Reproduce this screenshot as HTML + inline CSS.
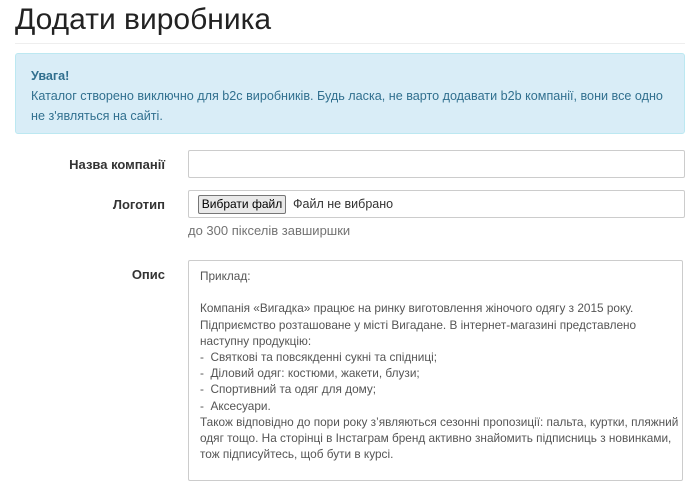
<!DOCTYPE html>
<html><head><meta charset="utf-8"><style>
body{margin:0;background:#fff;font-family:"Liberation Sans",sans-serif;font-size:13px;color:#333;width:700px;height:488px;overflow:hidden;position:relative}
h1{position:absolute;left:15px;top:0;margin:0;font-size:30px;font-weight:500;color:#222;line-height:40px}
.hr{position:absolute;left:15px;top:43px;width:670px;border-top:1px solid #eee}
.alert{position:absolute;left:15px;top:53px;width:668px;height:79px;background:#d9edf7;border:1px solid #bce8f1;border-radius:3px;color:#31708f;line-height:20px;font-size:12.6px}
.alert div{padding:12px 0 0 15px;white-space:nowrap}
.lbl{position:absolute;right:535px;font-weight:bold;color:#333}
.inp{position:absolute;left:188px;width:495px;border:1px solid #ccc;border-radius:2px;background:#fff}
.btn{position:absolute;left:9px;top:4px;width:88px;box-sizing:border-box;text-align:center;height:19px;border:1px solid #767676;border-radius:2px;background:#e9e9e9;line-height:17px;color:#000;font-size:12px}
.ta{color:#555;line-height:16.2px;padding:7px 0 0 11px;box-sizing:border-box;font-size:11.8px;white-space:nowrap;overflow:hidden}
</style></head><body>
<h1>Додати виробника</h1>
<div class="hr"></div>
<div class="alert"><div><b>Увага!</b><br>Каталог створено виключно для b2c виробників. Будь ласка, не варто додавати b2b компанії, вони все одно<br>не з'являться на сайті.</div></div>
<div class="lbl" style="top:157px">Назва компанії</div>
<div class="inp" style="top:150px;height:26px"></div>
<div class="lbl" style="top:197px">Логотип</div>
<div class="inp" style="top:190px;height:26px"><span class="btn">Вибрати файл</span><span style="position:absolute;left:104px;top:6px;color:#333;font-size:12.5px">Файл не вибрано</span></div>
<div style="position:absolute;left:188px;top:223px;color:#737373">до 300 пікселів завширшки</div>
<div class="lbl" style="top:267px">Опис</div>
<div class="inp ta" style="top:260px;height:221px">Приклад:<br><br>Компанія «Вигадка» працює на ринку виготовлення жіночого одягу з 2015 року.<br>Підприємство розташоване у місті Вигадане. В інтернет-магазині представлено<br>наступну продукцію:<br>-&nbsp; Святкові та повсякденні сукні та спідниці;<br>-&nbsp; Діловий одяг: костюми, жакети, блузи;<br>-&nbsp; Спортивний та одяг для дому;<br>-&nbsp; Аксесуари.<br>Також відповідно до пори року з’являються сезонні пропозиції: пальта, куртки, пляжний<br>одяг тощо. На сторінці в Інстаграм бренд активно знайомить підписниць з новинками,<br>тож підписуйтесь, щоб бути в курсі.</div>
</body></html>
